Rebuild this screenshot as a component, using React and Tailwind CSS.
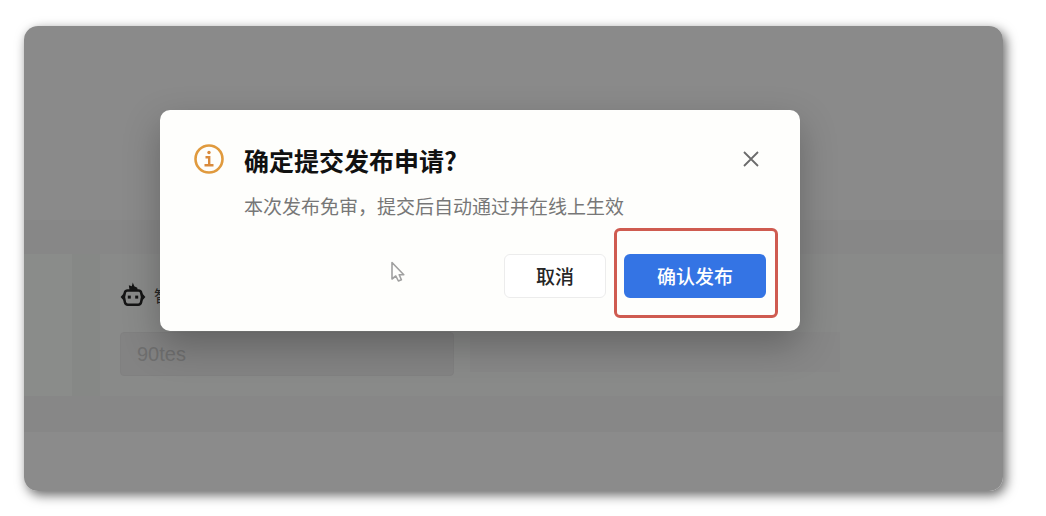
import React, { useState } from 'react';

const InfoIcon = () => (
  <svg viewBox="0 0 30 30" className="w-[30px] h-[30px] shrink-0" fill="none" aria-hidden="true">
    <circle cx="15" cy="15" r="13.5" stroke="#e09a3e" strokeWidth="2.6" />
    <circle cx="15" cy="8.5" r="1.7" fill="#d98a3c" />
    <path d="M11.5 13.2h3.7v7.4M10.5 21.3h9" stroke="#d98a3c" strokeWidth="2.4" />
  </svg>
);

const CloseIcon = () => (
  <svg viewBox="0 0 16 16" className="w-4 h-4" fill="none" stroke="#6b6b6b" strokeWidth="1.8" aria-hidden="true">
    <path d="M1 1l14 14M15 1L1 15" />
  </svg>
);

const RobotIcon = () => (
  <svg viewBox="0 0 26 26" className="w-[26px] h-[26px]" fill="none" aria-hidden="true">
    <path
      d="M7.5 8.5h11q2 0 2.6 1.900l1 4.700-1 5.200q-.5 2.400-2.900 2.400H7.800q-2.400 0-2.900-2.400l-1-5.200 1-4.700Q5.500 8.500 7.500 8.500z"
      stroke="#151515"
      strokeWidth="2.5"
      strokeLinejoin="round"
    />
    <path d="M4.5 10.500L.6 15l3.900 4.400zM21.500 10.500l3.900 4.500-3.900 4.400z" fill="#151515" />
    <path d="M8.800 3.200l3 1L12.800.4l1.500 3.800 3 1.600.4 2.800H9.600z" fill="#151515" />
    <rect x="7.800" y="13.600" width="3" height="3" fill="#151515" />
    <rect x="15.200" y="13.600" width="3" height="3" fill="#151515" />
  </svg>
);

const CursorIcon = () => (
  <svg viewBox="0 0 14 22" className="absolute left-[231px] top-[151px] w-3.5 h-[22px]" fill="#fefefc" aria-hidden="true">
    <path
      d="M1 1.5v16.5l3.800-3 2.600 5 3-1.200-2.200-5h4.600z"
      stroke="#a0a0a0"
      strokeWidth="1.6"
      strokeLinejoin="round"
    />
  </svg>
);

// Dimmed page under the dialog
const PageBackground = ({ disabled }) => (
  <div inert={disabled}>
    <div className="h-[194px] bg-[#8a8a8a]" />
    <div className="h-[34px] bg-[#878787]" />
    <div className="flex h-[142px] bg-[#898a89]">
      <div className="w-12 bg-[#8a8c8a]" />
      <div className="w-7 bg-[#868886]" />
      <div className="flex-1 pl-5 pt-7">
        <label htmlFor="bot-name" className="flex items-center gap-2 text-base leading-[26px] text-[#262626]">
          <RobotIcon />
          <span>智能体</span>
        </label>
        <div className="mt-6 flex">
          <input
            id="bot-name"
            type="text"
            defaultValue="90tes"
            className="w-[334px] h-[44px] rounded bg-[#838383] border border-[#808080] px-4 font-['Liberation_Sans',sans-serif] text-xl text-[#6f6f6f]"
          />
          <div className="ml-4 w-[370px] h-[40px] bg-[#878787]" />
        </div>
      </div>
    </div>
    <div className="h-9 bg-[#878787]" />
    <div className="h-[59px] bg-[#8b8b8b]" />
  </div>
);

const ConfirmDialog = ({ onClose }) => (
  <div
    role="dialog"
    aria-labelledby="dialog-title"
    className="relative w-full max-w-[640px] rounded-[10px] bg-[#fefefc] px-[34px] pt-[34px] pb-[33px] shadow-[0_14px_36px_rgba(0,0,0,0.26)]"
  >
    <div className="flex items-start gap-5">
      <InfoIcon />
      <div className="flex-1">
        <h2 id="dialog-title" className="text-[25px] leading-8 font-bold text-[#111111]">
          确定提交发布申请?
        </h2>
        <p className="mt-3.5 text-[19px] leading-8 text-[#777777]">本次发布免审，提交后自动通过并在线上生效</p>
      </div>
      <button type="button" aria-label="关闭" onClick={onClose} className="p-[7px]">
        <CloseIcon />
      </button>
    </div>

    <div className="mt-8 flex justify-end gap-[18px] text-[19px] leading-7 font-medium">
      <button
        type="button"
        onClick={onClose}
        className="h-11 w-[102px] rounded-md border border-[#ececec] bg-white text-[#262626]"
      >
        取消
      </button>
      <div className="relative">
        <button type="button" onClick={onClose} className="h-11 w-[142px] rounded-md bg-[#3474e4] text-white">
          确认发布
        </button>
        <span className="pointer-events-none absolute -left-2.5 -right-3 -top-[26px] -bottom-5 rounded-md border-3 border-[#cf5b50]" />
      </div>
    </div>

    <CursorIcon />
  </div>
);

const App = () => {
  const [open, setOpen] = useState(true);

  return (
    <main className="min-h-screen bg-white pl-6 pr-[43px] pt-[26px] pb-[25px] font-['Noto_Sans_CJK_SC',sans-serif]">
      <div className="relative overflow-hidden rounded-[14px] shadow-[3px_4px_12px_rgba(0,0,0,0.6)]">
        <PageBackground disabled={open} />
        {open && (
          <div className="absolute inset-0 flex items-start pl-[136px] pr-8 pt-[84px]">
            <ConfirmDialog onClose={() => setOpen(false)} />
          </div>
        )}
      </div>
    </main>
  );
};

export default App;
